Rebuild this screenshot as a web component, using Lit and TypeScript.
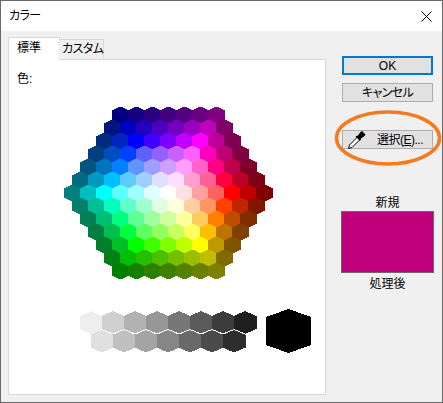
import { LitElement, html, css, svg } from "lit";
import { customElement } from "lit/decorators.js";

function hueRgb(h: number): number[] {
  h = ((h % 360) + 360) % 360;
  const x = (h % 60) / 60;
  const s = Math.floor(h / 60);
  const t = [[1, x, 0], [1 - x, 1, 0], [0, 1, x], [0, 1 - x, 1], [x, 0, 1], [1, 0, 1 - x]];
  return t[s];
}
function cellColor(q: number, r: number): string {
  const n = Math.max(Math.abs(q), Math.abs(r), Math.abs(q + r));
  if (n === 0) return "#ffffff";
  let h = 0;
  if (r === -n) h = 240 + (60 * q) / n;
  else if (q === n) h = 300 + (60 * (r + n)) / n;
  else if (q + r === n) h = (60 * r) / n;
  else if (r === n) h = 60 + (60 * -q) / n;
  else if (q === -n) h = 120 + (60 * (n - r)) / n;
  else h = 180 + (60 * -r) / n;
  const c = hueRgb(h);
  const scale: Record<number, number> = { 6: 0.5, 5: 0.75, 4: 1 };
  const mix: Record<number, number> = { 3: 0.375, 2: 0.625, 1: 0.875 };
  const v = c.map((u) =>
    Math.round(255 * (n >= 4 ? u * scale[n] : u + (1 - u) * mix[n]))
  );
  return `rgb(${v[0]},${v[1]},${v[2]})`;
}
function hexPts(cx: number, cy: number, hw: number, hh: number, sh: number) {
  return `${cx},${cy - hh} ${cx + hw},${cy - sh} ${cx + hw},${cy + sh} ${cx},${cy + hh} ${cx - hw},${cy + sh} ${cx - hw},${cy - sh}`;
}

const TOP_GRAYS = ["#eeeeee", "#cfcfcf", "#b2b2b2", "#969696", "#777777", "#5a5a5a", "#3c3c3c", "#1f1f1f"];
const BOTTOM_GRAYS = ["#e0e0e0", "#c0c0c0", "#a4a4a4", "#868686", "#696969", "#4b4b4b", "#2d2d2d"];

@customElement("app-root")
export class AppRoot extends LitElement {
  static styles = css`
    :host {
      display: block;
      position: relative;
      width: 443px;
      height: 403px;
      box-sizing: border-box;
      border: 1px solid #696969;
      background: #f0f0f0;
      font-family: "Liberation Sans", "Noto Sans CJK JP", sans-serif;
      font-size: 12px;
      line-height: 16px;
      color: #000;
      overflow: hidden;
      font-feature-settings: "palt";
    }
    .title {
      height: 30px;
      background: #fff;
      display: flex;
      align-items: center;
      justify-content: space-between;
      padding: 0 10px 0 8px;
    }
    .kana { letter-spacing: -0.6px; white-space: nowrap; }
    .close { display: block; width: 11px; height: 11px; }
    .body {
      display: flex;
      padding: 6px 8px 0 7px;
      align-items: flex-start;
    }
    .left { width: 318px; flex: none; }
    .tabs { display: flex; align-items: flex-end; height: 22px; position: relative; z-index: 1; }
    .tab {
      box-sizing: border-box;
      border: 1px solid #d9d9d9;
      border-bottom: none;
      white-space: nowrap;
    }
    .tab.active {
      width: 52px;
      height: 23px;
      margin-bottom: -1px;
      background: #fff;
      padding: 2px 0 0 8px;
      font-feature-settings: normal;
    }
    .tab.other {
      width: 45px;
      height: 20px;
      margin-left: -1px;
      background: #f0f0f0;
      padding: 1px 0 0 3px;
      border-left: none;
    }
    .panel {
      box-sizing: border-box;
      height: 336px;
      background: #fff;
      border: 1px solid #d9d9d9;
      padding: 11px 0 0 8px;
    }
    .label { height: 16px; font-feature-settings: normal; }
    .palette { display: block; margin: 13px 0 0 43px; width: 260px; height: 260px; shape-rendering: crispEdges; }
    .side {
      flex: 1;
      display: flex;
      flex-direction: column;
      align-items: stretch;
      padding: 19px 0 0 16px;
    }
    button {
      box-sizing: border-box;
      width: 91px;
      height: 19px;
      padding: 0;
      font: inherit;
      color: #000;
      background: #e1e1e1;
      border: 1px solid #adadad;
      display: flex;
      align-items: center;
      justify-content: center;
    }
    button.default { border: 2px solid #0078d7; height: 19px; margin-bottom: 8px; }
    button.pick {
      margin-top: 28px;
      justify-content: flex-start;
      position: relative;
    }
    .dropper { display: block; width: 18px; height: 18px; margin-left: 5px; flex: none; }
    .pick-text { margin-left: 11px; white-space: nowrap; font-feature-settings: normal; letter-spacing: -0.5px; }
    .pick-text u { text-decoration: underline; }
    .caption { width: 91px; text-align: center; font-feature-settings: normal; }
    .caption.new { margin-top: 46px; height: 17px; }
    .caption.old { height: 16px; margin-top: 3px; }
    .swatch {
      box-sizing: border-box;
      width: 93px;
      height: 62px;
      margin-left: -1px;
      margin-top: -1px;
      background: #c0007a;
      border: 1px solid #696969;
    }
    .ring {
      position: absolute;
      left: 333px;
      top: 109px;
      width: 108px;
      height: 56px;
      pointer-events: none;
    }
  `;

  private hexes() {
    const out = [];
    for (let r = -6; r <= 6; r++) {
      const count = 13 - Math.abs(r);
      for (let i = 0; i < count; i++) {
        const x = i - (count - 1) / 2;
        const q = x - r / 2;
        const cx = 168.5 + x * 16;
        const cy = 193 + r * 13;
        out.push(svg`<polygon points=${hexPts(cx, cy, 8.5, 8.5, 4.5)} fill=${cellColor(q, r)}></polygon>`);
      }
    }
    return out;
  }

  private grays() {
    const top = TOP_GRAYS.map((c, i) =>
      svg`<polygon points=${hexPts(91 + 22 * i, 322.5, 11.5, 11.5, 6.5)} fill=${c}></polygon>`
    );
    const bottom = BOTTOM_GRAYS.map((c, i) =>
      svg`<polygon points=${hexPts(102 + 22 * i, 341, 11.5, 11.5, 6.5)} fill=${c}></polygon>`
    );
    const pts: string[] = [];
    for (let i = 0; i < 7; i++) {
      pts.push(`${102 + 22 * i},329.5`, `${113 + 22 * i},334`);
      if (i < 6) pts.push(`${124 + 22 * i},329.5`);
    }
    return [
      ...top,
      ...bottom,
      svg`<polyline points=${pts.join(" ")} fill="none" stroke="#fff" stroke-width="1"></polyline>`,
    ];
  }

  render() {
    return html`
      <div class="title">
        <span class="kana">カラー</span>
        <svg class="close" viewBox="0 0 11 11"><path d="M.5.5l10 10M10.5.5l-10 10" stroke="#000" stroke-width="1" fill="none"></path></svg>
      </div>
      <div class="body">
        <div class="left">
          <div class="tabs">
            <div class="tab active">標準</div>
            <div class="tab other kana">カスタム</div>
          </div>
          <div class="panel">
            <div class="label">色:</div>
            <svg class="palette" viewBox="60 100 260 260">
              ${this.hexes()}
              ${this.grays()}
              <polygon points="288.5,309 311,317 311,345 288.5,353 266,345 266,317" fill="#000"></polygon>
            </svg>
          </div>
        </div>
        <div class="side">
          <button class="default">OK</button>
          <button class="kana">キャンセル</button>
          <button class="pick">
            <svg class="dropper" viewBox="0 0 18 18">
              <path d="M.5 17.500l1-3.500 8-8 2.500 2.500-8 8z" fill="#fff" stroke="#000" stroke-width="1" stroke-linejoin="miter"></path>
              <path d="M7.500 5.500l2.500-1 2.500-3.500 1.500-1 3.500 3.500-1 1.500-3.500 2.500-1 2.500z" fill="#000"></path>
            </svg>
            <span class="pick-text">選択(<u>E</u>)...</span>
          </button>
          <div class="caption new">新規</div>
          <div class="swatch"></div>
          <div class="caption old">処理後</div>
        </div>
      </div>
      <svg class="ring" viewBox="0 0 108 56">
        <ellipse cx="54" cy="28" rx="51.5" ry="26" fill="none" stroke="#f47b1f" stroke-width="3.5"></ellipse>
      </svg>
    `;
  }
}
